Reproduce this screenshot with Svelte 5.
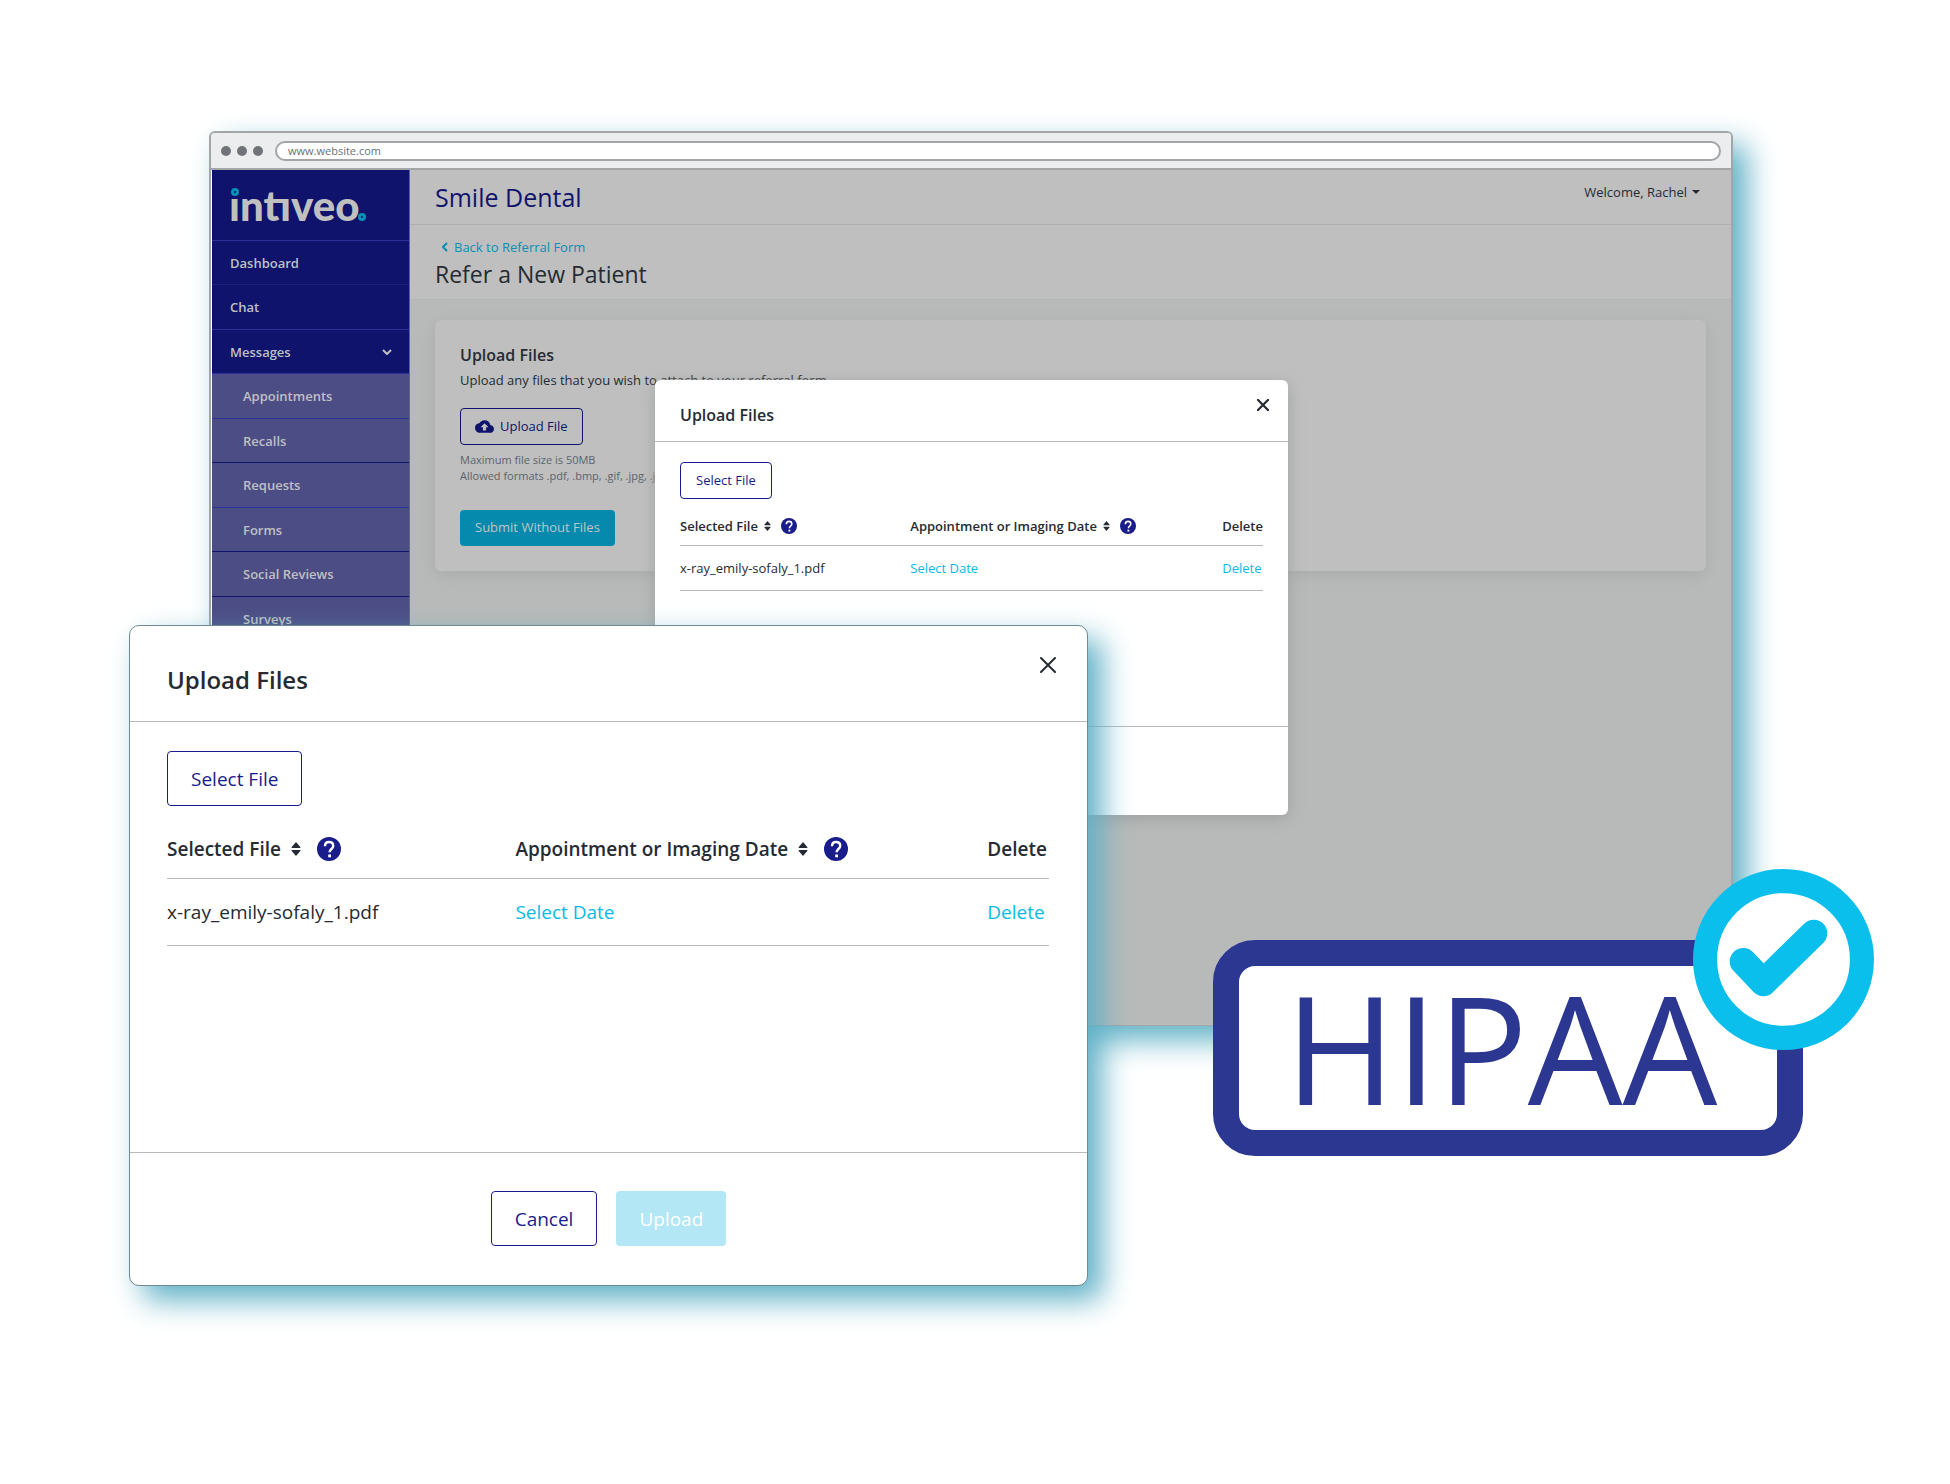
<script>
  const topItems = ['Dashboard', 'Chat'];
  const subItems = ['Appointments', 'Recalls', 'Requests', 'Forms', 'Social Reviews', 'Surveys'];
  const file = 'x-ray_emily-sofaly_1.pdf';
</script>

{#snippet sortIcon()}
  <svg class="sort" viewBox="0 0 10 14" aria-hidden="true">
    <path d="M5 0 9.5 5.2Q9.5 6 8.7 6H1.3Q.5 6 .5 5.2ZM5 14 .5 8.8Q.5 8 1.3 8H8.7Q9.5 8 9.5 8.8Z" />
  </svg>
{/snippet}

{#snippet helpIcon()}
  <svg class="help" viewBox="0 0 24 24" aria-hidden="true">
    <circle cx="12" cy="12" r="12" fill="#191c8b" />
    <path d="M8 9.2C8 6.6 9.7 5 12.1 5s4.1 1.500 4.100 3.900c0 3-3.600 3.200-3.600 6.300" fill="none" stroke="#fff" stroke-width="2.400" />
    <rect x="11.200" y="17.500" width="2.800" height="2.800" fill="#fff" />
  </svg>
{/snippet}

{#snippet dialog(size)}
  <section class="dialog {size}" aria-label="Upload Files">
    <header class="dialog-head">
      <h2>Upload Files</h2>
      <button class="close" aria-label="Close">
        <svg viewBox="0 0 16 16" aria-hidden="true"><path d="M1 1 15 15M15 1 1 15" /></svg>
      </button>
    </header>
    <div class="dialog-body">
      <button class="btn outline">Select File</button>
      <table>
        <thead>
          <tr>
            <th class="c1"><span class="th">Selected File {@render sortIcon()}{@render helpIcon()}</span></th>
            <th class="c2"><span class="th">Appointment or Imaging Date {@render sortIcon()}{@render helpIcon()}</span></th>
            <th class="c3">Delete</th>
          </tr>
        </thead>
        <tbody>
          <tr>
            <td>{file}</td>
            <td><a href="#date">Select Date</a></td>
            <td><a href="#delete">Delete</a></td>
          </tr>
        </tbody>
      </table>
    </div>
    <footer class="dialog-foot">
      {#if size === 'large'}
        <button class="btn outline">Cancel</button>
        <button class="btn pale" disabled>Upload</button>
      {/if}
    </footer>
  </section>
{/snippet}

<div class="stage">
  <div class="browser">
    <div class="chrome">
      <span class="dot"></span><span class="dot"></span><span class="dot"></span>
      <input class="url" aria-label="Address" value="www.website.com" />
    </div>
    <div class="app">
      <nav class="sidebar">
        <div class="logo"><span class="word">ıntıveo<i class="ring first"></i><i class="ring last"></i></span></div>
        {#each topItems as item}
          <a class="item" href="#nav">{item}</a>
        {/each}
        <button class="item">
          Messages
          <svg class="chev" viewBox="0 0 10 6" aria-hidden="true"><path d="M1 1 5 5 9 1" /></svg>
        </button>
        {#each subItems as item}
          <a class="item sub" href="#nav">{item}</a>
        {/each}
      </nav>
      <main>
        <header class="top">
          <span class="practice">Smile Dental</span>
          <button class="user">Welcome, Rachel
            <svg viewBox="0 0 8 4" aria-hidden="true"><path d="M0 0H8L4 4Z" /></svg>
          </button>
        </header>
        <div class="title">
          <a href="#back"><svg viewBox="0 0 6 10" aria-hidden="true"><path d="M5 1 1 5 5 9" /></svg>Back to Referral Form</a>
          <h1>Refer a New Patient</h1>
        </div>
        <section class="card">
          <h2>Upload Files</h2>
          <p>Upload any files that you wish to attach to your referral form.</p>
          <button class="btn outline upload">
            <svg viewBox="0 0 24 16" aria-hidden="true">
              <path d="M19.350 6.040A7.490 7.490 0 0 0 12 0C9.110 0 6.600 1.640 5.350 4.040A5.994 5.994 0 0 0 0 10c0 3.310 2.690 6 6 6h13c2.760 0 5-2.240 5-5 0-2.640-2.050-4.780-4.650-4.960ZM14 9v4h-4V9H7l5-5 5 5h-3Z" />
            </svg>Upload File
          </button>
          <p class="note">Maximum file size is 50MB<br />Allowed formats .pdf, .bmp, .gif, .jpg, .jpeg</p>
          <button class="btn submit">Submit Without Files</button>
        </section>
      </main>
    </div>
  </div>

  {@render dialog('small')}
  {@render dialog('large')}

  <div class="badge">
    HIPAA
    <svg class="check" viewBox="0 0 180 180" role="img" aria-label="Verified">
      <circle cx="90" cy="90" r="78" fill="#fff" stroke="#0abfeb" stroke-width="24" />
      <path d="M50 92 70 113 120 64" fill="none" stroke="#0abfeb" stroke-width="27" stroke-linecap="round" stroke-linejoin="round" />
    </svg>
  </div>
</div>

<style>
  :global(body) {
    background: #fff;
  }
  .stage,
  .stage * {
    box-sizing: border-box;
  }
  .stage {
    position: relative;
    min-height: 100vh;
    padding: 131px 217px 197px 209px;
    overflow: hidden;
    font-family: 'Open Sans', 'Noto Sans', sans-serif;
    font-size: 13px;
    color: #262b33;
  }
  h1, h2, p {
    margin: 0;
  }
  button, input {
    font: inherit;
    color: inherit;
  }
  button {
    background: none;
    border: 0;
    padding: 0;
  }
  a {
    text-decoration: none;
  }

  /* Browser window */
  .browser {
    border: 2px solid #a3a5a7;
    border-bottom: 1px solid #a3a5a7;
    border-radius: 6px 6px 0 0;
    background: #fff;
    box-shadow: 14px 14px 30px #5fb0c6;
  }
  .chrome {
    display: flex;
    align-items: center;
    gap: 6px;
    height: 37px;
    padding: 0 10px;
    background: #ebedef;
    border-bottom: 2px solid #a3a5a7;
    border-radius: 4px 4px 0 0;
  }
  .dot {
    width: 10px;
    height: 10px;
    border-radius: 50%;
    background: #707478;
  }
  .url {
    flex: 1;
    min-width: 0;
    height: 20px;
    margin-left: 6px;
    padding: 0 11px;
    border: 2px solid #a3a5a7;
    border-radius: 10px;
    background: #fff;
    color: #6b7278;
    font-size: 11px;
  }
  .app {
    display: flex;
    min-height: 855px;
    padding-left: 1px;
  }

  .sidebar {
    flex: none;
    display: flex;
    flex-direction: column;
    width: 198px;
    background: #4c4d85;
    border-right: 1px solid #5d60a6;
  }
  .logo {
    height: 71px;
    padding: 17px 0 0 17px;
    background: #10136c;
    border-bottom: 1px solid #2a3296;
  }
  .word {
    position: relative;
    display: inline-block;
    font-family: Lato, sans-serif;
    font-weight: 900;
    font-size: 42px;
    line-height: 36px;
    color: #c0c0c0;
  }
  .ring {
    position: absolute;
    width: 8px;
    height: 8px;
    border: 3px solid #0690b4;
    border-radius: 50%;
  }
  .first {
    left: 2px;
    top: 1px;
  }
  .last {
    right: -7px;
    bottom: 2px;
  }
  .item {
    display: flex;
    align-items: center;
    justify-content: space-between;
    height: 44px;
    padding: 0 17px 0 18px;
    background: #10136c;
    border-bottom: 1px solid #2a3296;
    color: #bfc0c4;
    font-weight: 600;
    font-size: 13px;
  }
  .item:nth-child(odd) {
    height: 45px;
  }
  .item:nth-child(2) {
    border-bottom-color: #1c1f7c;
  }
  .item.sub {
    padding-left: 31px;
    background: #4c4d85;
  }
  .item.sub:nth-child(even),
  .item.sub:nth-child(9) {
    border-bottom-color: #10136c;
  }
  .chev {
    width: 10px;
    height: 6px;
    fill: none;
    stroke: #bfc0c4;
    stroke-width: 2;
  }

  main {
    flex: 1;
    min-width: 0;
    background: #b8bab9;
  }
  .top {
    display: flex;
    justify-content: space-between;
    height: 55px;
    padding: 10px 31px 0 25px;
    background: #bfbfbf;
    border-bottom: 1px solid #b0b0b1;
  }
  .practice {
    font-size: 25px;
    line-height: 34px;
    color: #10136c;
  }
  .user {
    display: flex;
    align-items: center;
    gap: 5px;
    height: 23px;
  }
  .user svg {
    width: 8px;
    height: 4px;
    fill: #262b33;
  }
  .title {
    height: 75px;
    padding: 12px 25px 0;
    background: #bfbfbf;
    border-bottom: 1px solid #b4b5b5;
  }
  .title a {
    display: flex;
    align-items: center;
    gap: 6px;
    height: 20px;
    padding-left: 7px;
    color: #0690b4;
  }
  .title a svg {
    width: 6px;
    height: 10px;
    fill: none;
    stroke: #0690b4;
    stroke-width: 2;
  }
  .title h1 {
    font-size: 23px;
    line-height: 34px;
    font-weight: 400;
  }
  .card {
    display: flex;
    flex-direction: column;
    align-items: flex-start;
    margin: 20px 25px 0;
    padding: 22px 25px 25px;
    border-radius: 6px;
    background: #bfbfbf;
    box-shadow: 0 4px 16px #a9abab;
  }
  h2 {
    font-size: 16px;
    font-weight: 600;
    line-height: 26px;
  }
  .card p {
    line-height: 24px;
  }
  .btn {
    display: flex;
    align-items: center;
    justify-content: center;
    height: 37px;
    padding: 0 15px 2px;
    border-radius: 4px;
    white-space: nowrap;
  }
  .outline {
    border: 1px solid #191c8b;
    color: #191c8b;
  }
  .upload {
    gap: 6px;
    margin: 16px 0 7px;
    padding: 0 14px 1px;
    color: #10136c;
    border-color: #10136c;
  }
  .upload svg {
    width: 19px;
    height: 13px;
    fill: #10136c;
  }
  .card .note {
    font-size: 11px;
    line-height: 16px;
    color: #5c646b;
  }
  .submit {
    height: 36px;
    margin-top: 26px;
    background: #0589ad;
    color: #bfc6c8;
  }

  /* Dialog windows */
  .dialog {
    position: absolute;
    display: flex;
    flex-direction: column;
    background: #fff;
    border-radius: 6px;
  }
  .dialog-head {
    display: flex;
    justify-content: space-between;
    border-bottom: 1px solid #bababa;
  }
  .close svg {
    display: block;
    width: 100%;
    height: 100%;
    fill: none;
    stroke: #262b33;
    stroke-width: 2;
    stroke-linecap: round;
  }
  .dialog-body {
    flex: 1;
  }
  .dialog table {
    width: 100%;
    border-collapse: collapse;
    table-layout: fixed;
  }
  .dialog th,
  .dialog td {
    padding: 0;
    text-align: left;
    white-space: nowrap;
    font-weight: 400;
    border-bottom: 1px solid #bababa;
  }
  .dialog th {
    font-weight: 600;
  }
  .dialog td a {
    color: #0abae6;
  }
  .c1 {
    width: 39.500%;
  }
  .c3 {
    width: 7%;
  }
  .th {
    display: flex;
    align-items: center;
  }
  .sort {
    fill: #262b33;
  }
  .dialog-foot {
    display: flex;
    justify-content: center;
    border-top: 1px solid #bababa;
  }
  .pale {
    background: #b3e7f5;
    color: #fff;
  }

  .small {
    left: 655px;
    top: 380px;
    width: 633px;
    height: 435px;
    box-shadow: 0 4px 16px #9fa1a1;
  }
  .small .dialog-head {
    height: 62px;
    padding: 22px 19px 0 25px;
  }
  .small .close {
    width: 12px;
    height: 12px;
    margin-top: -3px;
  }
  .small .close svg {
    stroke-width: 3;
  }
  .small .dialog-body {
    padding: 20px 25px 0;
  }
  .small th {
    height: 46px;
    padding-top: 9px;
  }
  .small td {
    height: 45px;
  }
  .small .sort {
    width: 7px;
    height: 10px;
    margin: 0 10px 0 6px;
  }
  .small .help {
    width: 16px;
    height: 16px;
  }
  .small .dialog-foot {
    height: 89px;
  }

  .large {
    left: 129px;
    top: 625px;
    width: 959px;
    height: 661px;
    border: 1px solid #6f8a92;
    border-radius: 10px;
    box-shadow: 14px 14px 30px #5fb0c6;
    font-size: 19px;
  }
  .large h2 {
    font-size: 24px;
    line-height: 36px;
  }
  .large .dialog-head {
    height: 96px;
    padding: 36px 31px 0 37px;
  }
  .large .close {
    width: 16px;
    height: 16px;
    margin-top: -5px;
  }
  .large .dialog-body {
    padding: 29px 38px 0 37px;
  }
  .large .btn {
    height: 55px;
    padding: 0 23px;
  }
  .large th {
    height: 72px;
    padding-top: 15px;
  }
  .large td {
    height: 67px;
  }
  .large .sort {
    width: 10px;
    height: 14px;
    margin: 0 16px 0 10px;
  }
  .large .help {
    width: 24px;
    height: 24px;
  }
  .large .dialog-foot {
    height: 133px;
    padding-top: 38px;
    gap: 19px;
  }

  /* Compliance badge */
  .badge {
    position: absolute;
    left: 1213px;
    top: 940px;
    width: 590px;
    height: 216px;
    padding-left: 46px;
    border: 26px solid #2b3790;
    border-radius: 42px;
    background: #fff;
    color: #2b3790;
    font-size: 150px;
    line-height: 162px;
  }
  .check {
    position: absolute;
    right: -97px;
    top: -97px;
    width: 181px;
    height: 181px;
  }
</style>
